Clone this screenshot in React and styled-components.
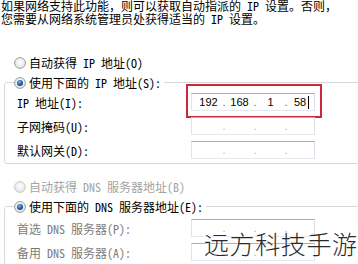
import React from "react";
import styled, { createGlobalStyle } from "styled-components";

const GlobalStyle = createGlobalStyle`
  html, body { margin: 0; padding: 0; background: #fff; overflow: hidden; }
  body {
    font-family: "Noto Sans Mono CJK SC", "Noto Sans CJK SC", sans-serif;
    font-size: 12px;
    color: #000;
  }
`;

const Page = styled.div`
  position: relative;
  width: 358px;
  height: 264px;
  overflow: hidden;
  background: #fff;
`;

const Intro = styled.div`
  margin-top: 0;
  padding-left: 1px;
  line-height: 12px;
  white-space: nowrap;
  & > span { display: block; }
  & > span + span { margin-top: 1px; }
`;

const RadioRow = styled.div`
  display: flex;
  align-items: center;
  gap: 3px;
  height: 13px;
  line-height: 13px;
  white-space: nowrap;
  margin-top: ${(p) => p.$mt || 0}px;
  padding-left: ${(p) => p.$pl || 0}px;
  color: ${(p) => (p.$disabled ? "#a3a3a3" : "#000")};
`;

const Group = styled.fieldset`
  margin: ${(p) => p.$mt}px 0 0 4px;
  width: 400px;
  border: 1px solid #d5d9de;
  border-radius: 3px;
  padding: ${(p) => p.$pt}px 0 1px 12px;
  box-sizing: border-box;
`;

const Legend = styled.legend`
  margin-left: -3px;
  padding: 0 3px 0 0;
`;

const FieldRow = styled.div`
  display: grid;
  grid-template-columns: 174px 124px;
  align-items: center;
  height: 24px;
`;

const Label = styled.span`
  color: ${(p) => (p.$muted ? "#7c7c7c" : "#000")};
  white-space: nowrap;
  line-height: 13px;
`;

const IpBox = styled.div`
  position: relative;
  box-sizing: border-box;
  width: 124px;
  height: 18px;
  border: 1px solid;
  border-color: #abadb3 #dbdfe6 #e3e9ef #e2e3ea;
  background: #fff;
  display: flex;
  align-items: center;
  padding-left: 3px;
  font-family: "Liberation Sans", Arial, sans-serif;
  font-size: 11px;
  color: #000;
`;

const Seg = styled.span`
  width: 27px;
  text-align: center;
  flex: none;
`;

const LastSeg = styled.span`
  display: flex;
  align-items: center;
  padding-left: 6px;
`;

const Dot = styled.span`
  width: 4px;
  text-align: center;
  flex: none;
  color: ${(p) => (p.$empty ? "#b0b0b0" : "#666")};
`;

const Caret = styled.span`
  display: inline-block;
  width: 1px;
  height: 13px;
  margin-left: 2px;
  background: #000;
`;

const Highlight = styled.div`
  position: absolute;
  top: -10px;
  left: -6px;
  right: -8px;
  bottom: -8px;
  border: 2px solid #c9283f;
  pointer-events: none;
`;

const Watermark = styled.div`
  position: absolute;
  left: 204px;
  top: 228px;
  font-family: "Noto Sans CJK SC", sans-serif;
  font-weight: 300;
  font-size: 25px;
  letter-spacing: 0.6px;
  line-height: 30px;
  color: #2a2a2a;
  white-space: nowrap;
  text-shadow: 0 0 2px #fff, 0 0 2px #fff;
`;

function Radio({ checked, disabled }) {
  return (
    <svg width="12" height="12" viewBox="0 0 12 12" style={{ flex: "none" }}>
      <defs>
        <radialGradient id="rbg" cx="50%" cy="40%" r="60%">
          <stop offset="0%" stopColor="#ffffff" />
          <stop offset="100%" stopColor="#e2e2e2" />
        </radialGradient>
        <radialGradient id="rdot" cx="40%" cy="35%" r="70%">
          <stop offset="0%" stopColor="#7fb8ef" />
          <stop offset="60%" stopColor="#2160b0" />
          <stop offset="100%" stopColor="#0f3d7a" />
        </radialGradient>
      </defs>
      <circle
        cx="6"
        cy="6"
        r="5.4"
        fill="url(#rbg)"
        stroke={disabled ? "#c9c9c9" : "#9a9c9e"}
        strokeWidth="1"
      />
      {checked && <circle cx="6" cy="6" r="3" fill="url(#rdot)" />}
    </svg>
  );
}

function IpField({ values, highlight }) {
  const empty = !values;
  const v = values || ["", "", "", ""];
  return (
    <IpBox>
      <Seg>{v[0]}</Seg>
      <Dot $empty={empty}>.</Dot>
      <Seg>{v[1]}</Seg>
      <Dot $empty={empty}>.</Dot>
      <Seg>{v[2]}</Seg>
      <Dot $empty={empty}>.</Dot>
      <LastSeg>
        {v[3]}
        {highlight && <Caret />}
      </LastSeg>
      {highlight && <Highlight />}
    </IpBox>
  );
}

export default function App() {
  return (
    <Page>
      <GlobalStyle />
      <Intro>
        <span>如果网络支持此功能，则可以获取自动指派的 IP 设置。否则，</span>
        <span>您需要从网络系统管理员处获得适当的 IP 设置。</span>
      </Intro>

      <RadioRow $mt={31} $pl={14}>
        <Radio />
        <span>自动获得 IP 地址(O)</span>
      </RadioRow>

      <Group $mt={7} $pt={1}>
        <Legend>
          <RadioRow>
            <Radio checked />
            <span>使用下面的 IP 地址(S):</span>
          </RadioRow>
        </Legend>
        <FieldRow>
          <Label>IP 地址(I):</Label>
          <IpField values={["192", "168", "1", "58"]} highlight />
        </FieldRow>
        <FieldRow>
          <Label>子网掩码(U):</Label>
          <IpField />
        </FieldRow>
        <FieldRow>
          <Label>默认网关(D):</Label>
          <IpField />
        </FieldRow>
      </Group>

      <RadioRow $mt={16} $pl={14} $disabled>
        <Radio disabled />
        <span>自动获得 DNS 服务器地址(B)</span>
      </RadioRow>

      <Group $mt={7} $pt={3}>
        <Legend>
          <RadioRow>
            <Radio checked />
            <span>使用下面的 DNS 服务器地址(E):</span>
          </RadioRow>
        </Legend>
        <FieldRow>
          <Label $muted>首选 DNS 服务器(P):</Label>
          <IpField />
        </FieldRow>
        <FieldRow>
          <Label $muted>备用 DNS 服务器(A):</Label>
          <IpField />
        </FieldRow>
      </Group>

      <Watermark>远方科技手游</Watermark>
    </Page>
  );
}
